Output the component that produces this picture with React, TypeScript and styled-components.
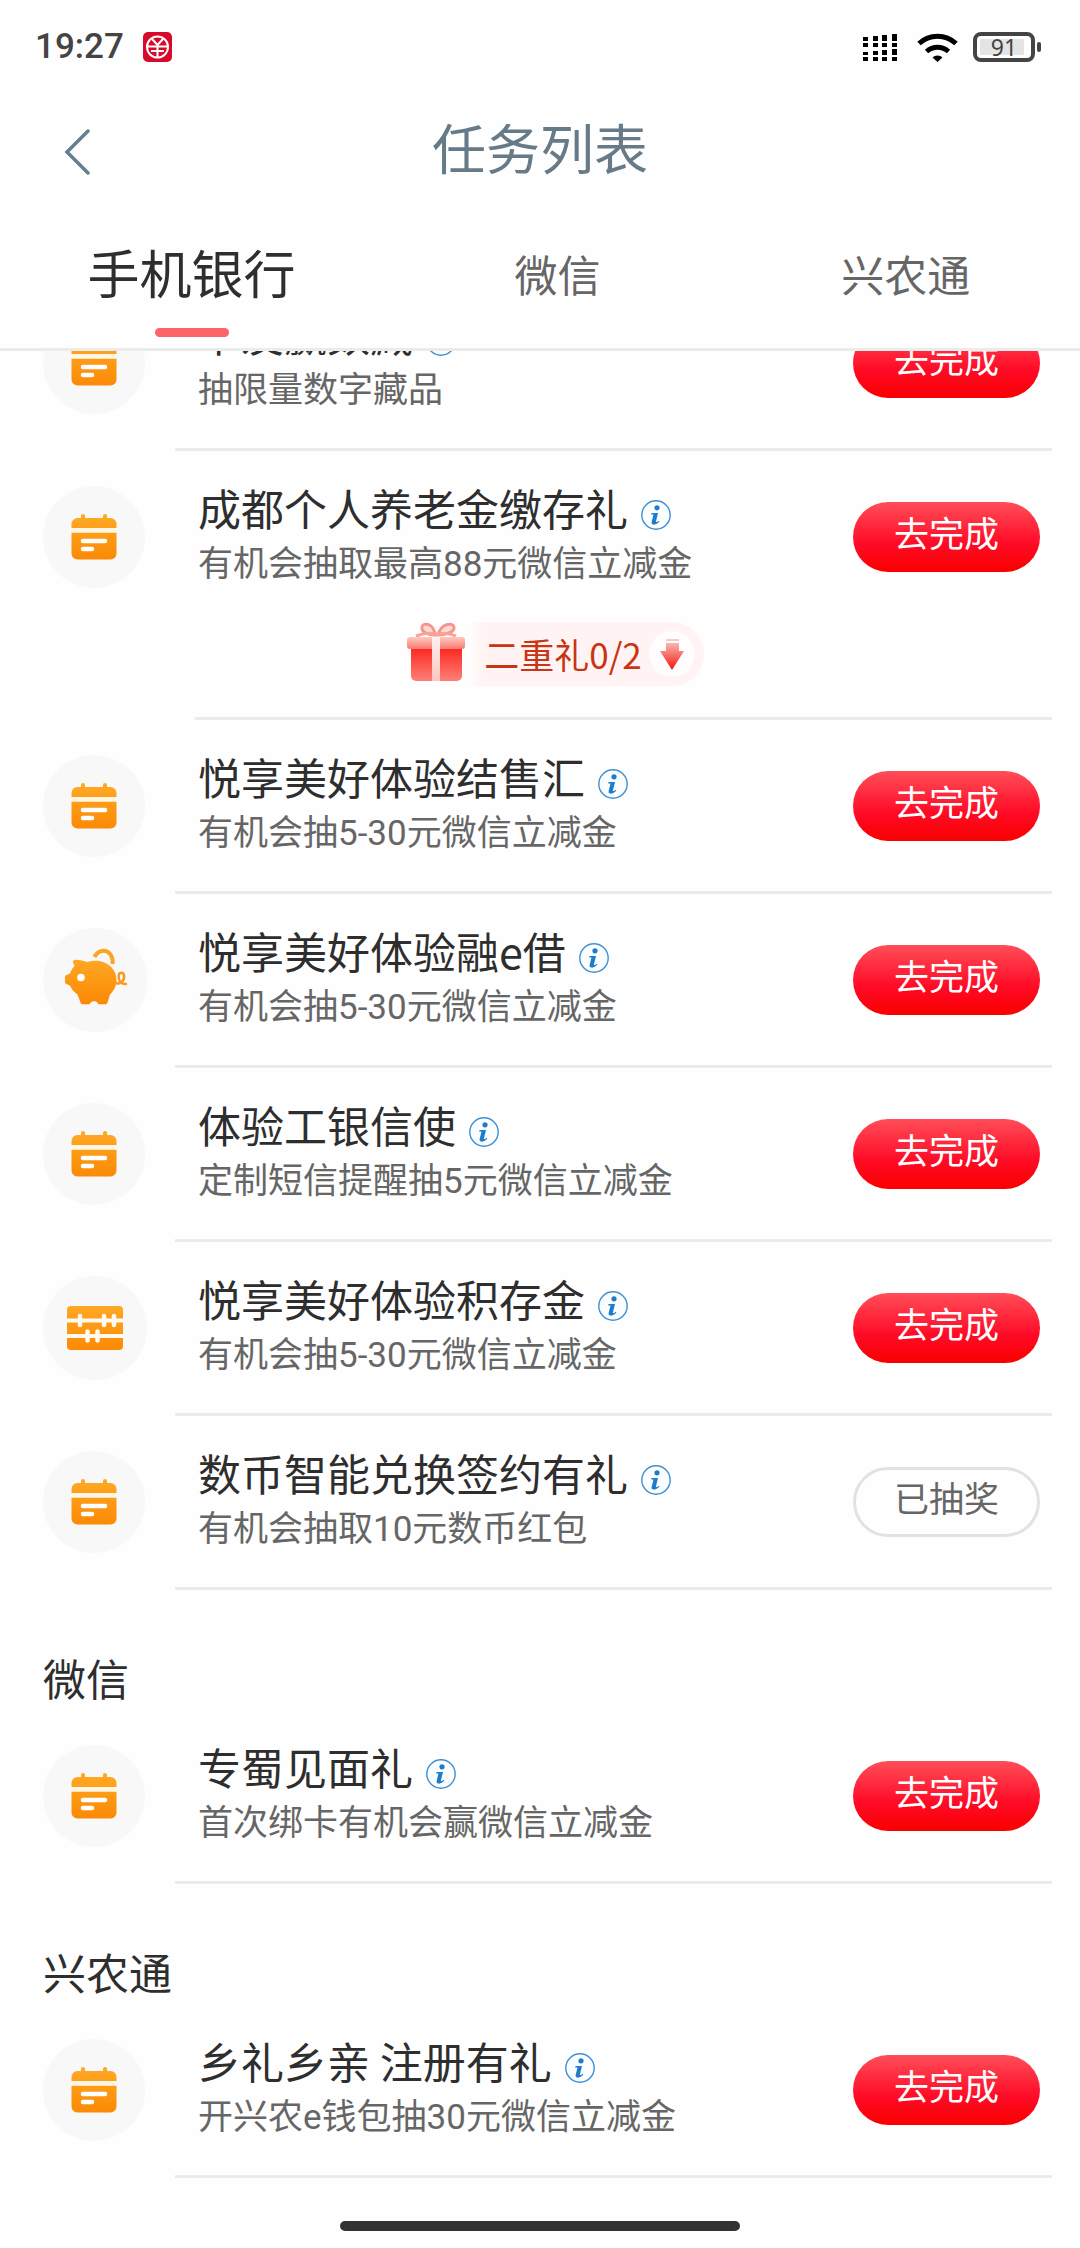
import React from 'react';
import styled, { createGlobalStyle, css } from 'styled-components';

const GlobalStyle = createGlobalStyle`
  * { box-sizing: border-box; }
  body {
    margin: 0;
    background: #fefefe;
    color: #2e2e2e;
    font-family: Roboto, 'Noto Sans CJK SC', sans-serif;
  }
  button { font-family: inherit; border: 0; background: none; padding: 0; cursor: pointer; }
  h1, h2, h3, p, ul { margin: 0; padding: 0; font-weight: 400; }
  ul { list-style: none; }
  svg { display: block; flex: none; }
`;

const Screen = styled.div`
  display: flex;
  flex-direction: column;
  min-height: 100vh;
`;

const StatusBar = styled.div`
  display: flex;
  align-items: center;
  gap: 19px;
  height: 94px;
  padding: 0 39px 0 35px;
`;

const Clock = styled.span`
  flex: 1;
  display: flex;
  align-items: center;
  gap: 19px;
  color: #444;
  font-size: 35px;
  line-height: 40px;
  font-weight: 500;
`;

const Battery = styled.span`
  position: relative;
  display: flex;
  width: 68px;
  height: 30px;
  margin-left: -4px;
`;

const Level = styled.span`
  position: absolute;
  inset: 0 6px 0 0;
  color: #444;
  font-family: 'Noto Sans', sans-serif;
  font-size: 23px;
  line-height: 31px;
  text-align: center;
`;

const TitleBar = styled.header`
  display: grid;
  grid-template-columns: 120px 1fr 120px;
  align-items: center;
  height: 116px;
`;

const BackButton = styled.button`
  display: flex;
  padding-left: 64px;
`;

const PageTitle = styled.h1`
  color: #667a88;
  font-size: 54px;
  line-height: 80px;
  text-align: center;
`;

const Tabs = styled.nav`
  display: grid;
  grid-template-columns: 11fr 10fr 10fr;
  height: 141px;
  border-bottom: 3px solid #ebebeb;
`;

const Tab = styled.button<{ $active?: boolean }>`
  display: flex;
  flex-direction: column;
  align-items: center;
  justify-content: space-between;
  padding: 27px 0 11px;
  color: #666;
  font-size: 43px;
  line-height: 80px;
  &::after {
    content: '';
    width: 74px;
    height: 9px;
    border-radius: 5px;
  }
  ${(p) => p.$active && css`
    color: #2e2e2e;
    font-size: 52px;
    &::after { background: #fc646a; }
  `}
`;

const Viewport = styled.main`
  flex: 1;
  overflow: hidden;
`;

const ScrolledContent = styled.div`
  margin-top: -74px;
`;

const SectionTitle = styled.h2`
  padding: 62px 43px 0;
  font-size: 43px;
  line-height: 58px;
`;

const Item = styled.li`
  padding: 0 28px 0 43px;
`;

const ItemBody = styled.div`
  display: flex;
  align-items: center;
  height: 171px;
  padding-right: 12px;
`;

const Divider = styled.div<{ $inset?: boolean }>`
  height: 3px;
  margin-left: ${(p) => (p.$inset ? 152 : 132)}px;
  background: #ebebeb;
`;

const IconSlot = styled.div`
  flex: none;
  width: 155px;
`;

const Texts = styled.div`
  flex: 1;
  min-width: 0;
`;

const TitleLine = styled.div`
  display: flex;
  align-items: center;
  gap: 13px;
  padding-bottom: 6px;
`;

const ItemTitle = styled.h3`
  font-family: 'Noto Sans CJK SC', sans-serif;
  font-size: 43px;
  line-height: 50px;
  white-space: pre;
`;

const InfoButton = styled.button`
  display: flex;
  padding-top: 16px;
`;

const Subtitle = styled.p`
  color: #666;
  font-size: 35px;
  line-height: 54px;
`;

const Action = styled.button<{ $done?: boolean }>`
  flex: none;
  width: 187px;
  height: 70px;
  padding-bottom: 2px;
  border-radius: 35px;
  font-size: 35px;
  line-height: 50px;
  color: #fff;
  background: linear-gradient(#ff4e58, #ff0a26 60%, #f90000);
  ${(p) => p.$done && css`
    color: #666;
    background: #fefefe;
    border: 3px solid #e2e2e2;
  `}
`;

const GiftLine = styled.div`
  display: flex;
  align-items: flex-start;
  justify-content: center;
  height: 95px;
  padding-left: 16px;
`;

const GiftButton = styled.button`
  display: flex;
  align-items: center;
`;

const GiftPill = styled.span`
  display: flex;
  align-items: center;
  gap: 7px;
  height: 64px;
  margin-left: 4px;
  padding: 0 9px 0 15px;
  border-radius: 0 32px 32px 0;
  background: linear-gradient(90deg, #fff5f400, #fff4f3 12px);
  color: #c73514;
  font-family: 'Noto Sans CJK SC', sans-serif;
  font-size: 35px;
  line-height: 50px;
`;

const HomeArea = styled.footer`
  display: flex;
  justify-content: center;
  padding-bottom: 17px;
  &::after {
    content: '';
    width: 37%;
    height: 10px;
    border-radius: 5px;
    background: #333;
  }
`;

const Gradients = () => (
  <svg width="0" height="0" style={{ position: 'absolute' }} aria-hidden="true">
    <defs>
      <linearGradient id="orange" x1="0" y1="26" x2="0" y2="76" gradientUnits="userSpaceOnUse">
        <stop offset="0" stopColor="#ffab27" />
        <stop offset="1" stopColor="#fb8803" />
      </linearGradient>
    </defs>
  </svg>
);

const CalendarIcon = () => (
  <svg width="102" height="102" viewBox="0 0 102 102" aria-hidden="true">
    <circle cx="51" cy="51" r="51" fill="#f8f8f8" />
    <g fill="url(#orange)">
      <rect x="38" y="28" width="4" height="8" rx="2" />
      <rect x="60" y="28" width="4" height="8" rx="2" />
      <path d="M28.500 42v-4a6 6 0 0 1 6-6h33a6 6 0 0 1 6 6v4z" />
      <path d="M28.500 46.500h45v21a6 6 0 0 1-6 6h-33a6 6 0 0 1-6-6z" />
    </g>
    <path d="M28.500 42h45v4.500h-45z" fill="#fff6e4" />
    <path d="M40 55h22M40 63h9" stroke="#fff" strokeWidth="4.500" strokeLinecap="round" />
  </svg>
);

const PigIcon = () => (
  <svg width="104" height="104" viewBox="0 0 104 104" aria-hidden="true">
    <circle cx="52" cy="52" r="52" fill="#f8f8f8" />
    <path d="M51.500 29C55 22 63 21 67 26c2.500 3 3 6.500 2.500 10" fill="none" stroke="#fca325" strokeWidth="4" />
    <path fill="url(#orange)" d="M30 34.500c-.5-2 1-3 3-2.700 4 .2 8 1.200 11 2.200 4-1.300 8-1.600 12-1 10 1.500 17.500 9 17.500 19 0 6-2.500 10.500-6.500 14.500l-2.500 8c-.4 1.200-1 1.800-2.200 1.800h-5.600c-1.400 0-2-.8-2.400-1.800-1-1.800-5.600-1.800-6.600 0-.4 1-1 1.800-2.400 1.800h-5.600c-1.200 0-1.800-.6-2.200-1.800l-3-8c-3.500-2.500-6-5.500-7.500-9l-3-1.200c-1.500-.6-2-1.200-2-2.700v-4c0-1.500.5-2.300 2-2.800l3-1.300c1-3 2.500-5.500 4.500-7.500z" />
    <path d="M73 55c5 2 9-3 8-8-.8-3-4.500-3-5.200 0-.8 4 1.200 9.500 7.200 9" fill="none" stroke="#fb9a20" strokeWidth="2.500" strokeLinecap="round" />
    <circle cx="38" cy="49.500" r="3.800" fill="#fff" />
  </svg>
);

const AbacusIcon = () => (
  <svg width="104" height="104" viewBox="0 0 104 104" aria-hidden="true">
    <circle cx="52" cy="52" r="52" fill="#f8f8f8" />
    <rect x="24" y="30" width="56" height="44" rx="4" fill="url(#orange)" />
    <path d="M24 44.500h56M24 60h56" stroke="#fffaf0" strokeWidth="4" />
    <path d="M37 40v9M61 40v9M71 40v9M44.500 55.500v9M54.500 55.500v9" stroke="#fffaf0" strokeWidth="4.500" strokeLinecap="round" />
  </svg>
);

const InfoIcon = () => (
  <svg width="30" height="30" viewBox="0 0 30 30" aria-hidden="true">
    <circle cx="15" cy="15" r="14.200" fill="#fbfeff" stroke="#3f8fd2" strokeWidth="1.400" />
    <circle cx="16" cy="7.800" r="2.600" fill="#1f7ccb" />
    <path d="M10.500 13h6.500l-2.200 9c.8.400 2-.3 3-1.200l.6.800c-2 2.400-4 3.300-6 3-2-.4-2-1.800-1.600-3.400l1.700-6.800h-2.300z" fill="#1f7ccb" />
  </svg>
);

const GiftIcon = () => (
  <svg width="58" height="64" viewBox="0 0 58 64" aria-hidden="true">
    <defs>
      <linearGradient id="box" x1="0" y1="0" x2="0" y2="1">
        <stop offset="0" stopColor="#fb2a22" />
        <stop offset="1" stopColor="#ff8078" />
      </linearGradient>
      <linearGradient id="lid" x1="0" y1="0" x2="0" y2="1">
        <stop offset="0" stopColor="#ffc8c0" />
        <stop offset="1" stopColor="#fb7a70" />
      </linearGradient>
      <linearGradient id="ribbon" x1="0" y1="0" x2="0" y2="1">
        <stop offset="0" stopColor="#fff1ef" />
        <stop offset="1" stopColor="#ffc5c0" />
      </linearGradient>
    </defs>
    <g fill="#ffd9d5" stroke="#f6958c" strokeWidth="3">
      <path d="M28 13C21 13 14 10 15 5s12-4 13 8z" />
      <path d="M31 13c7 0 17-3 16-8s-13-4-16 8z" />
    </g>
    <path d="M9 14q10-4 19-2h3q9-2 18 2" fill="none" stroke="#f7a39b" strokeWidth="3" />
    <path d="M4 27h51v27a5 5 0 0 1-5 5H9a5 5 0 0 1-5-5z" fill="url(#box)" />
    <rect y="15" width="58" height="12" rx="3" fill="url(#lid)" />
    <path d="M25 15h8v44h-8z" fill="url(#ribbon)" />
  </svg>
);

const DownIcon = () => (
  <svg width="46" height="46" viewBox="0 0 46 46" aria-hidden="true">
    <defs>
      <linearGradient id="arrow" x1="0" y1="0" x2="0" y2="1">
        <stop offset="0" stopColor="#fcc" />
        <stop offset="1" stopColor="#ee1708" />
      </linearGradient>
    </defs>
    <circle cx="23" cy="23" r="23" fill="#fffdfd" />
    <path d="M17 8h13v2H17zM17 12h13v8h5L23 39 11 20h6z" fill="url(#arrow)" />
  </svg>
);

const icons = { calendar: CalendarIcon, pig: PigIcon, abacus: AbacusIcon };

type Task = {
  icon?: keyof typeof icons;
  title: string;
  note: string;
  done?: boolean;
  gift?: string;
};

const bankTasks: Task[] = [
  { title: '卡友赢数藏', note: '抽限量数字藏品' },
  { title: '成都个人养老金缴存礼', note: '有机会抽取最高88元微信立减金', gift: '二重礼0/2' },
  { title: '悦享美好体验结售汇', note: '有机会抽5-30元微信立减金' },
  { title: '悦享美好体验融e借', note: '有机会抽5-30元微信立减金', icon: 'pig' },
  { title: '体验工银信使', note: '定制短信提醒抽5元微信立减金' },
  { title: '悦享美好体验积存金', note: '有机会抽5-30元微信立减金', icon: 'abacus' },
  { title: '数币智能兑换签约有礼', note: '有机会抽取10元数币红包', done: true },
];
const wechatTasks: Task[] = [{ title: '专蜀见面礼', note: '首次绑卡有机会赢微信立减金' }];
const ruralTasks: Task[] = [{ title: '乡礼乡亲 注册有礼', note: '开兴农e钱包抽30元微信立减金' }];

const TaskItem = ({ icon = 'calendar', title, note, done, gift }: Task) => {
  const Icon = icons[icon];
  return (
    <Item>
      <ItemBody>
        <IconSlot><Icon /></IconSlot>
        <Texts>
          <TitleLine>
            <ItemTitle>{title}</ItemTitle>
            <InfoButton aria-label="说明"><InfoIcon /></InfoButton>
          </TitleLine>
          <Subtitle>{note}</Subtitle>
        </Texts>
        <Action $done={done}>{done ? '已抽奖' : '去完成'}</Action>
      </ItemBody>
      {gift && (
        <GiftLine>
          <GiftButton>
            <GiftIcon />
            <GiftPill>{gift}<DownIcon /></GiftPill>
          </GiftButton>
        </GiftLine>
      )}
      <Divider $inset={!!gift} />
    </Item>
  );
};

const TaskList = ({ tasks }: { tasks: Task[] }) => (
  <ul>{tasks.map((t) => <TaskItem key={t.title} {...t} />)}</ul>
);

export default function App() {
  return (
    <Screen>
      <GlobalStyle />
      <Gradients />
      <StatusBar>
        <Clock>
          19:27
          <svg width="29" height="30" viewBox="0 0 29 30" aria-hidden="true">
            <rect width="29" height="30" rx="5" fill="#d80a2c" />
            <g fill="none" stroke="#fff" strokeWidth="2">
              <circle cx="14.500" cy="15" r="10.500" />
              <path d="M9 7l5.500 6L20 7M5 14.500h19M8 19h13M14.500 13v12" />
            </g>
          </svg>
        </Clock>
        <svg width="35" height="27" viewBox="0 0 35 27" aria-hidden="true">
          <path d="M0 3h5v4H0zM0 9h5v4H0zM0 18h5v3H0zM0 23h5v4H0zM10 2h5v5h-5zM10 9h5v4h-5zM10 17h5v4h-5zM10 23h5v4h-5zM19 1h5v6h-5zM19 9h5v4h-5zM19 16h5v5h-5zM19 23h5v4h-5zM29 0h5v7h-5zM29 9h5v4h-5zM29 15h5v6h-5zM29 23h5v4h-5z" />
        </svg>
        <svg width="41" height="30" viewBox="0 0 41 30" aria-hidden="true">
          <path d="M2 11.500a27 27 0 0 1 37 0M9.500 19.500a16.500 16.500 0 0 1 22 0" fill="none" stroke="#000" strokeWidth="5" />
          <path d="M15.500 25.500a7 7 0 0 1 10 0l-5 4.500z" />
        </svg>
        <Battery>
          <svg width="68" height="30" viewBox="0 0 68 30" aria-hidden="true">
            <rect x="7" y="7" width="44" height="16" fill="#e4e4e4" />
            <rect x="2" y="2" width="58" height="26" rx="6" fill="none" stroke="#444" strokeWidth="4" />
            <rect x="64" y="10" width="4" height="10" rx="2" fill="#444" />
          </svg>
          <Level>91</Level>
        </Battery>
      </StatusBar>
      <TitleBar>
        <BackButton aria-label="返回">
          <svg width="26" height="46" viewBox="0 0 26 46" aria-hidden="true">
            <path d="M24 2L3 23l21 21" fill="none" stroke="#667f8e" strokeWidth="3.500" strokeLinecap="round" />
          </svg>
        </BackButton>
        <PageTitle>任务列表</PageTitle>
      </TitleBar>
      <Tabs>
        <Tab $active>手机银行</Tab>
        <Tab>微信</Tab>
        <Tab>兴农通</Tab>
      </Tabs>
      <Viewport>
        <ScrolledContent>
          <TaskList tasks={bankTasks} />
          <SectionTitle>微信</SectionTitle>
          <TaskList tasks={wechatTasks} />
          <SectionTitle>兴农通</SectionTitle>
          <TaskList tasks={ruralTasks} />
        </ScrolledContent>
      </Viewport>
      <HomeArea />
    </Screen>
  );
}
